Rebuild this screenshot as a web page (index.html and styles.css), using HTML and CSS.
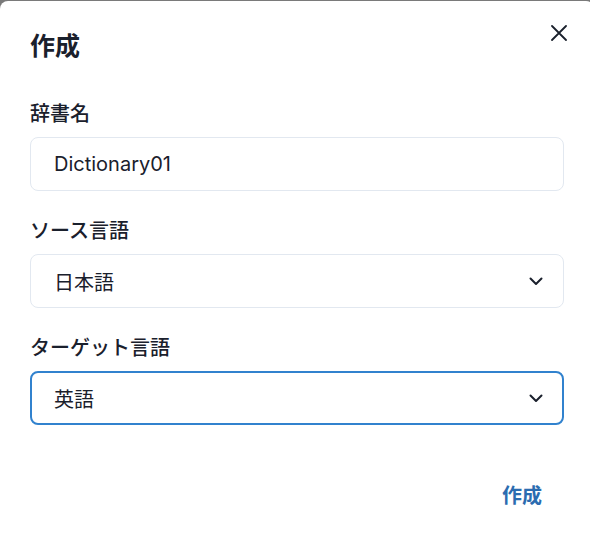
FILE: index.html
```html
<!DOCTYPE html>
<html lang="ja">
<head>
<meta charset="utf-8">
<title>作成</title>
<link rel="stylesheet" href="styles.css">
</head>
<body>
<div class="modal">
  <header class="modal-header">
    <h2 class="title">作成</h2>
    <button class="close" aria-label="閉じる">
      <svg width="16" height="16" viewBox="0 0 16 16"><path d="M1 1 L15 15 M15 1 L1 15" stroke="#1a202c" stroke-width="1.8" stroke-linecap="round" fill="none"/></svg>
    </button>
  </header>
  <div class="modal-body">
    <div class="field">
      <label class="label">辞書名</label>
      <div class="control">Dictionary01</div>
    </div>
    <div class="field">
      <label class="label">ソース言語</label>
      <div class="control select">
        <span>日本語</span>
        <svg class="chevron" width="14" height="9" viewBox="0 0 14 9"><path d="M1.5 1.5 L7 7 L12.5 1.5" stroke="#1a202c" stroke-width="2" stroke-linecap="round" stroke-linejoin="round" fill="none"/></svg>
      </div>
    </div>
    <div class="field">
      <label class="label">ターゲット言語</label>
      <div class="control select focused">
        <span>英語</span>
        <svg class="chevron" width="14" height="9" viewBox="0 0 14 9"><path d="M1.5 1.5 L7 7 L12.5 1.5" stroke="#1a202c" stroke-width="2" stroke-linecap="round" stroke-linejoin="round" fill="none"/></svg>
      </div>
    </div>
  </div>
  <footer class="modal-footer">
    <button class="btn-ghost">作成</button>
  </footer>
</div>
</body>
</html>
```

FILE: styles.css
```css
html, body {
  margin: 0;
  padding: 0;
}
body {
  background: #7a7a7a;
  width: 590px;
  height: 550px;
  overflow: hidden;
  font-family: Inter, "Noto Sans CJK JP", sans-serif;
  color: #1a202c;
}
.modal {
  position: relative;
  margin-top: 1px;
  width: 594px;
  height: 549px;
  background: #ffffff;
  border-radius: 8px 8px 0 0;
  box-sizing: border-box;
}
.modal-header {
  padding: 24px 30px 20px;
}
.title {
  margin: 0;
  font-size: 25px;
  line-height: 38px;
  font-weight: 700;
  font-family: "Noto Sans CJK JP", sans-serif;
}
.close {
  position: absolute;
  top: 12px;
  right: 15px;
  width: 40px;
  height: 40px;
  border: 0;
  background: transparent;
  padding: 0;
  display: flex;
  align-items: center;
  justify-content: center;
}
.modal-body {
  padding: 15px 30px 0;
  display: flex;
  flex-direction: column;
  gap: 24px;
}
.field {
  display: flex;
  flex-direction: column;
  gap: 9px;
}
.label {
  font-family: "Noto Sans CJK JP", sans-serif;
  font-size: 20px;
  line-height: 30px;
  font-weight: 500;
}
.control {
  height: 54px;
  box-sizing: border-box;
  border: 1px solid #e2e8f0;
  border-radius: 8px;
  padding: 0 20px 0 23px;
  display: flex;
  align-items: center;
  font-size: 20px;
  color: #1a202c;
}
.select {
  justify-content: space-between;
  font-family: "Noto Sans CJK JP", sans-serif;
}
.focused {
  border: 2px solid #3182ce;
  padding-left: 22px;
  padding-right: 19px;
}
.modal-footer {
  display: flex;
  justify-content: flex-end;
  padding: 44px 30px 0;
}
.btn-ghost {
  height: 50px;
  padding: 0 22px;
  border: 0;
  background: transparent;
  color: #2b6cb0;
  font-family: "Noto Sans CJK JP", sans-serif;
  font-size: 20px;
  font-weight: 700;
  border-radius: 8px;
}
```
